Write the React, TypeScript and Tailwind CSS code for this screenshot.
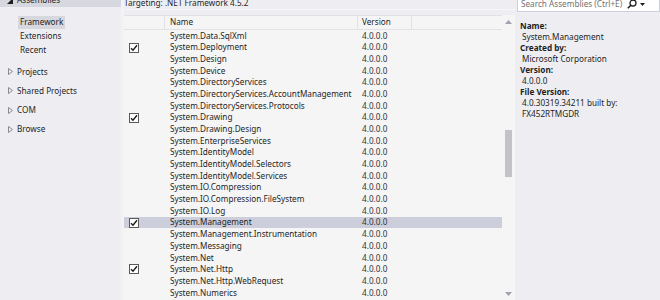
type Row = { name: string; checked?: boolean; selected?: boolean };

const rows: Row[] = [
  { name: "System.Data.SqlXml" },
  { name: "System.Deployment", checked: true },
  { name: "System.Design" },
  { name: "System.Device" },
  { name: "System.DirectoryServices" },
  { name: "System.DirectoryServices.AccountManagement" },
  { name: "System.DirectoryServices.Protocols" },
  { name: "System.Drawing", checked: true },
  { name: "System.Drawing.Design" },
  { name: "System.EnterpriseServices" },
  { name: "System.IdentityModel" },
  { name: "System.IdentityModel.Selectors" },
  { name: "System.IdentityModel.Services" },
  { name: "System.IO.Compression" },
  { name: "System.IO.Compression.FileSystem" },
  { name: "System.IO.Log" },
  { name: "System.Management", checked: true, selected: true },
  { name: "System.Management.Instrumentation" },
  { name: "System.Messaging" },
  { name: "System.Net" },
  { name: "System.Net.Http", checked: true },
  { name: "System.Net.Http.WebRequest" },
  { name: "System.Numerics" },
];

function Collapsed() {
  return (
    <svg width="5" height="7" viewBox="0 0 5 7" className="shrink-0">
      <path d="M0.5 0.5 L4.5 3.5 L0.5 6.5 Z" fill="none" stroke="#8a8a8a" strokeWidth="1" />
    </svg>
  );
}

function Expanded() {
  return (
    <svg width="6" height="6" viewBox="0 0 6 6" className="shrink-0">
      <path d="M6 0 L6 6 L0 6 Z" fill="#1e1e1e" />
    </svg>
  );
}

function Check() {
  return (
    <div className="w-[10px] h-[10px] border border-[#5a5a5a] bg-white flex items-center justify-center">
      <svg width="8" height="8" viewBox="0 0 8 8">
        <path d="M1 4.2 L3 6.3 L7 1.2" fill="none" stroke="#1e1e1e" strokeWidth="1.4" />
      </svg>
    </div>
  );
}

function TreeItem({ label }: { label: string }) {
  return (
    <div className="h-[19.3px] flex items-center gap-[4px] pl-[8px]">
      <Collapsed />
      <span>{label}</span>
    </div>
  );
}

export default function App() {
  return (
    <div
      className="w-[660px] h-[300px] overflow-hidden flex bg-[#eeeef2] text-[#1e1e1e] text-[8.2px] leading-none"
      style={{ fontFamily: '"Noto Sans", "Open Sans", sans-serif' }}
    >
      {/* left tree */}
      <div className="w-[121px] shrink-0 flex flex-col">
        <div className="h-[13px] -mt-[6px] bg-[#d6d7df] flex items-center gap-[4px] pl-[7px]">
          <Expanded />
          <span>Assemblies</span>
        </div>
        <div className="flex flex-col pl-[18px] pt-[8px]">
          <div className="h-[14px] flex items-center">
            <span className="bg-[#d6d7df] px-[2px] h-[13px] flex items-center">Framework</span>
          </div>
          <div className="h-[14px] flex items-center pl-[2px]">Extensions</div>
          <div className="h-[14px] flex items-center pl-[2px]">Recent</div>
        </div>
        <div className="flex flex-col pt-[5px]">
          <TreeItem label="Projects" />
          <TreeItem label="Shared Projects" />
          <TreeItem label="COM" />
          <TreeItem label="Browse" />
        </div>
      </div>
      <div className="w-[3px] shrink-0 bg-[#f3f3f6]" />

      {/* middle list */}
      <div className="flex-1 flex flex-col min-w-0">
        <div className="h-[13px] -mt-[3px] flex items-center border-b border-[#f7f7f9]">
          Targeting: .NET Framework 4.5.2
        </div>
        <div className="flex flex-1 mt-[5px] bg-[#f5f5f5]">
          <div className="w-[378px] shrink-0 flex flex-col">
            <div className="h-[15px] flex border-t border-b border-[#e2e2e6]">
              <div className="w-[41px] border-r border-[#e2e2e6]" />
              <div className="w-[193px] border-r border-[#e2e2e6] flex items-center pl-[5px]">Name</div>
              <div className="w-[54px] border-r border-[#e2e2e6] flex items-center pl-[4px]">Version</div>
              <div className="flex-1" />
            </div>
            {rows.map((r) => (
              <div
                key={r.name}
                className={`h-[11.68px] flex items-center ${r.selected ? "bg-[#cccedb]" : ""}`}
              >
                <div className="w-[41px] shrink-0 pl-[5px] flex items-center">
                  {r.checked && <Check />}
                </div>
                <div className="w-[193px] shrink-0 pl-[5px] whitespace-nowrap">{r.name}</div>
                <div className="pl-[4px] text-[#333]">4.0.0.0</div>
              </div>
            ))}
          </div>
          {/* scrollbar */}
          <div className="w-[13px] shrink-0 flex flex-col items-center bg-[#f5f5f5]">
            <svg width="7" height="4" viewBox="0 0 7 4" className="mt-[5px]">
              <path d="M0 4 L3.5 0 L7 4 Z" fill="#a0a2ad" />
            </svg>
            <div className="h-[106px]" />
            <div className="w-[7px] h-[47px] bg-[#c2c3c9]" />
            <div className="flex-1" />
            <svg width="7" height="4" viewBox="0 0 7 4" className="mb-[4px]">
              <path d="M0 0 L7 0 L3.5 4 Z" fill="#a0a2ad" />
            </svg>
          </div>
        </div>
      </div>

      {/* right details */}
      <div className="w-[145px] shrink-0 flex flex-col pl-[2px]">
        <div className="h-[16px] -mt-[4px] bg-white border border-[#cccedb] flex items-center pl-[3px] pr-[14px]">
          <span className="text-[#717171] flex-1 whitespace-nowrap">Search Assemblies (Ctrl+E)</span>
          <svg width="10" height="10" viewBox="0 0 10 10" className="shrink-0">
            <circle cx="6" cy="4" r="3" fill="none" stroke="#1e1e1e" strokeWidth="1.3" />
            <path d="M3.8 6.2 L0.8 9.2" stroke="#1e1e1e" strokeWidth="1.6" />
          </svg>
          <svg width="5" height="3" viewBox="0 0 5 3" className="ml-[3px] shrink-0">
            <path d="M0 0 L5 0 L2.5 3 Z" fill="#1e1e1e" />
          </svg>
        </div>
        <div className="flex flex-col pl-[3px] pt-[8px] leading-[11px]">
          <div className="font-bold">Name:</div>
          <div className="pl-[2px]">System.Management</div>
          <div className="font-bold">Created by:</div>
          <div className="pl-[2px]">Microsoft Corporation</div>
          <div className="font-bold">Version:</div>
          <div className="pl-[2px]">4.0.0.0</div>
          <div className="font-bold">File Version:</div>
          <div className="pl-[2px]">4.0.30319.34211 built by:</div>
          <div className="pl-[2px]">FX452RTMGDR</div>
        </div>
      </div>
    </div>
  );
}
